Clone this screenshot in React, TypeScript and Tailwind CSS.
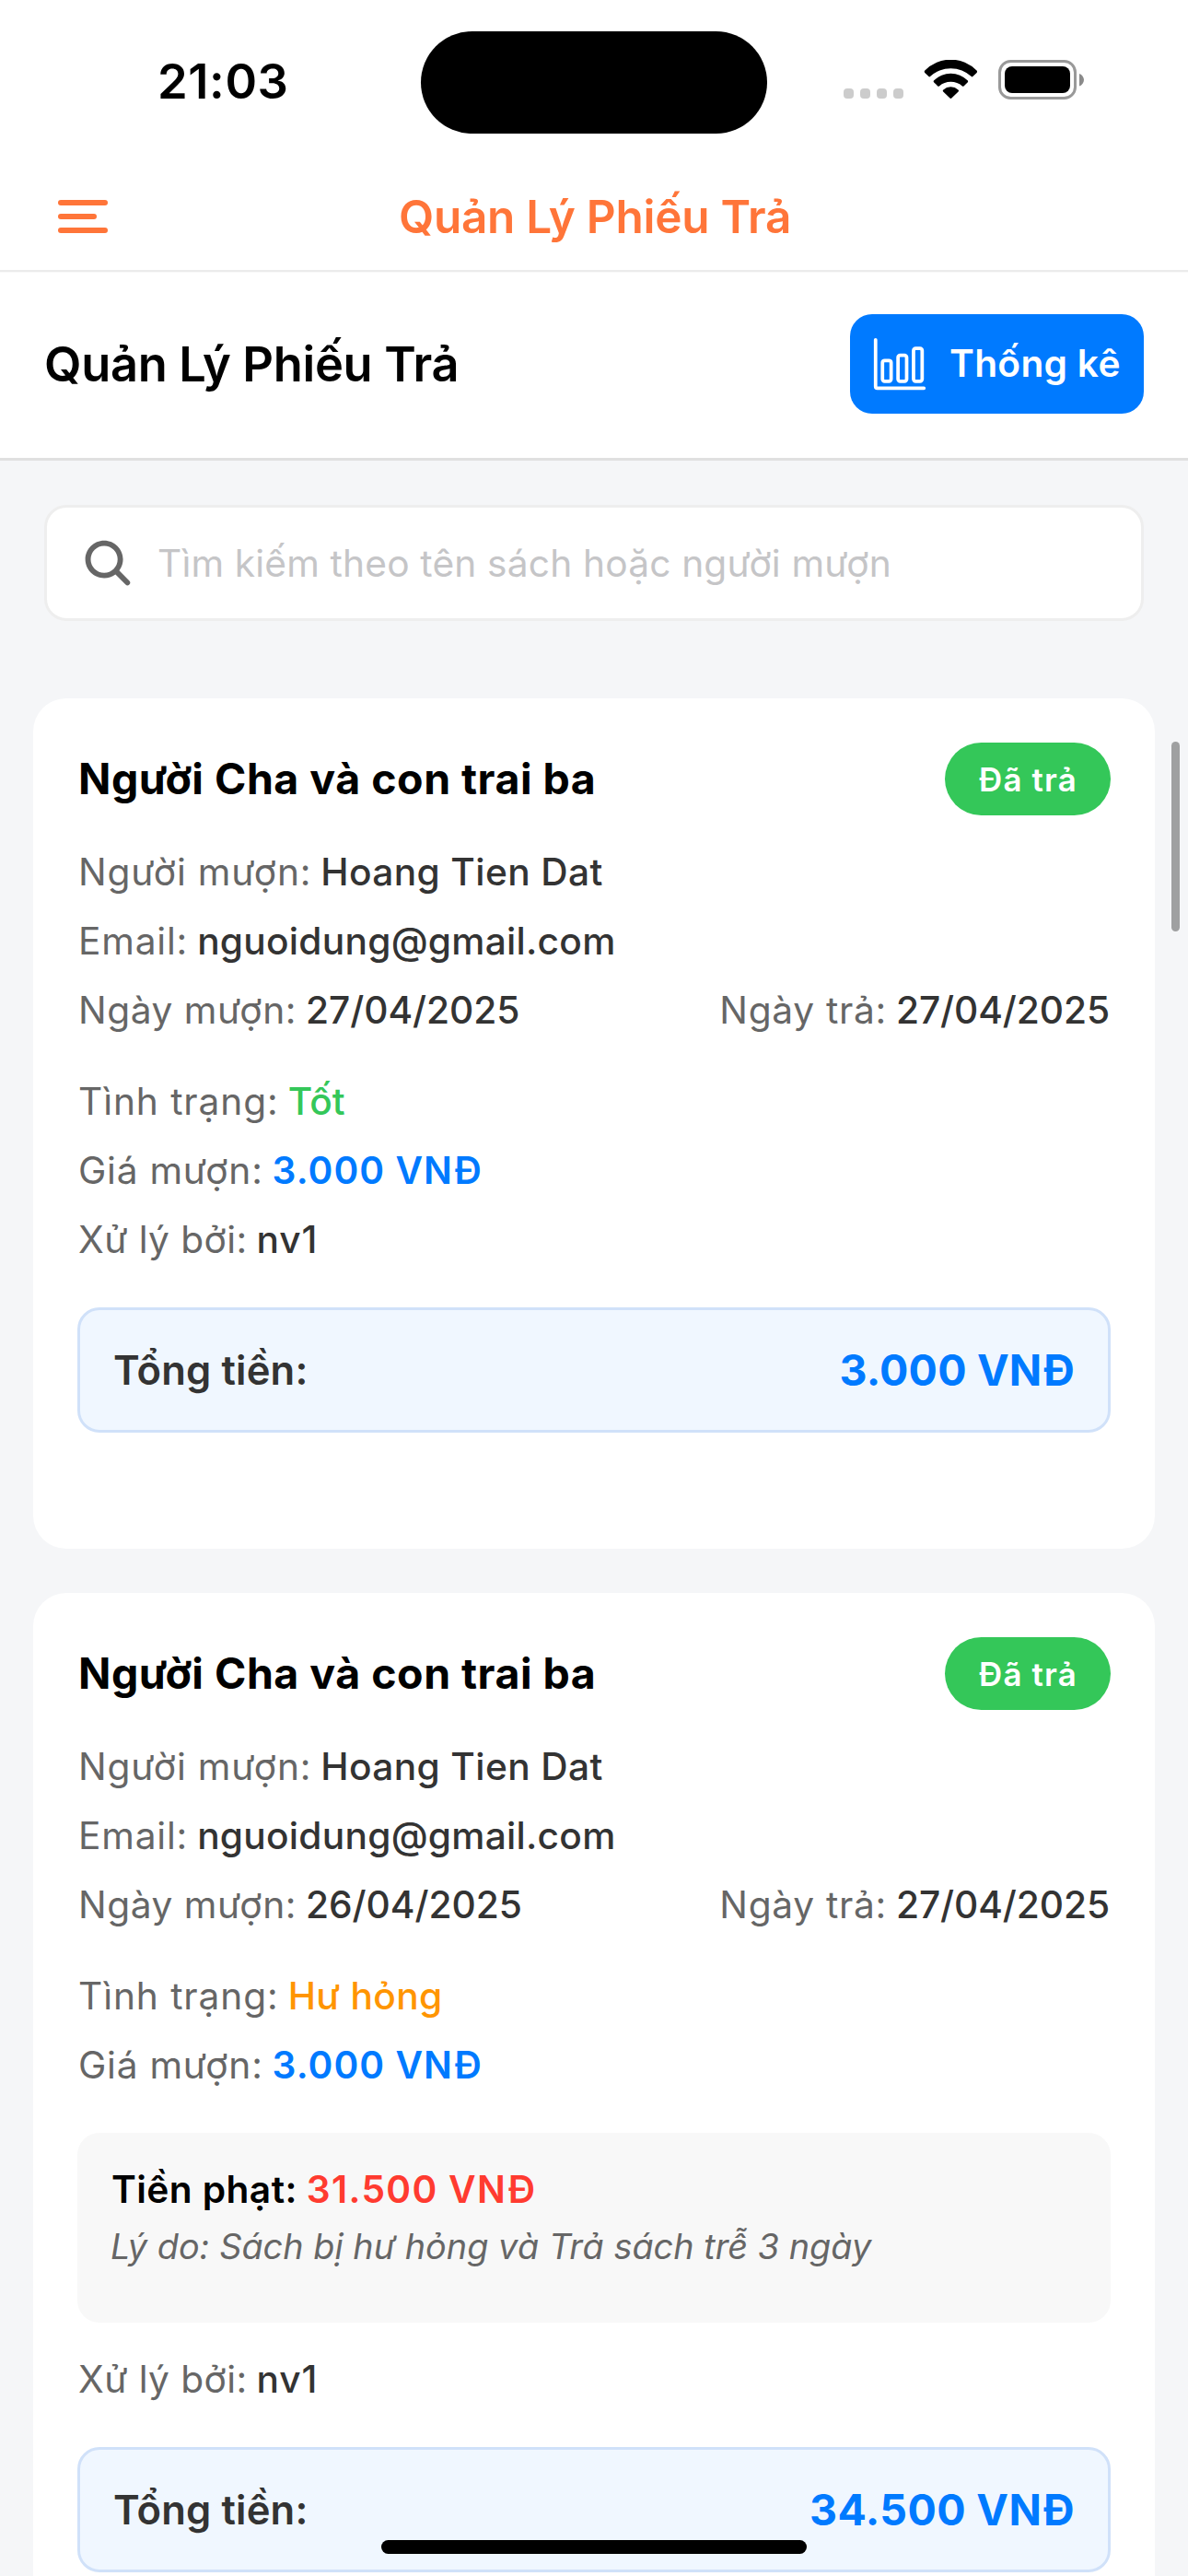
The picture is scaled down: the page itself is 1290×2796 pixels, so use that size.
import type { ReactNode } from 'react';
import { IoBarChartOutline, IoSearch } from 'react-icons/io5';

type Slip = {
  title: string;
  borrower: string;
  email: string;
  borrowed: string;
  returned: string;
  condition: string;
  conditionStyle: string;
  price: string;
  fine?: { amount: string; reason: string };
  handler: string;
  total: string;
  totalTracking: string;
};

const slips: Slip[] = [
  {
    title: 'Người Cha và con trai ba',
    borrower: 'Hoang Tien Dat',
    email: 'nguoidung@gmail.com',
    borrowed: '27/04/2025',
    returned: '27/04/2025',
    condition: 'Tốt',
    conditionStyle: 'text-[#34c759] tracking-[0.002em]',
    price: '3.000 VNĐ',
    handler: 'nv1',
    total: '3.000 VNĐ',
    totalTracking: 'tracking-[0.0044em]',
  },
  {
    title: 'Người Cha và con trai ba',
    borrower: 'Hoang Tien Dat',
    email: 'nguoidung@gmail.com',
    borrowed: '26/04/2025',
    returned: '27/04/2025',
    condition: 'Hư hỏng',
    conditionStyle: 'text-[#ff9500] tracking-[0.008em]',
    price: '3.000 VNĐ',
    fine: {
      amount: '31.500 VNĐ',
      reason: 'Lý do: Sách bị hư hỏng và Trả sách trễ 3 ngày',
    },
    handler: 'nv1',
    total: '34.500 VNĐ',
    totalTracking: 'tracking-[0.0085em]',
  },
];

function StatusIcons() {
  return (
    <svg width="262" height="44" viewBox="0 0 262 44" className="-mt-[3px] shrink-0">
      <g fill="#cccccc">
        <rect x="0" y="31" width="11" height="11" rx="4" />
        <rect x="18" y="31" width="11" height="11" rx="4" />
        <rect x="36" y="31" width="11" height="11" rx="4" />
        <rect x="54" y="31" width="11" height="11" rx="4" />
      </g>
      <g fill="#000000">
        <path d="M88.3 11.6A39 39 0 0 1 144.5 11.6Q145.6 12.8 144.6 13.9L140.3 18.1Q139.6 18.8 138.8 18.1A32.5 32.5 0 0 0 94 18.1Q93.2 18.8 92.5 18.1L88.2 13.9Q87.2 12.8 88.3 11.6Z" />
        <path d="M98.2 22.3A25.6 25.6 0 0 1 134.6 22.3Q135.7 23.4 134.6 24.5L130.5 28.4Q129.7 29 128.9 28.4A19.4 19.4 0 0 0 103.9 28.4Q103.1 29 102.3 28.4L98.2 24.5Q97.1 23.4 98.2 22.3Z" />
        <path d="M108.3 32.4A12.2 12.2 0 0 1 124.5 32.4Q125.7 33.5 124.6 34.5L117.3 41.6Q116.4 42.4 115.5 41.6L108.2 34.5Q107.1 33.5 108.3 32.4Z" />
        <rect x="175" y="7" width="71" height="29" rx="8" />
      </g>
      <rect x="169.5" y="1.5" width="82" height="40" rx="12" fill="none" stroke="#999999" strokeWidth="3" />
      <path d="M256 15C259 16 261 19 261 21.7S259 27.4 256 28.5Z" fill="#8a8a8a" />
    </svg>
  );
}

function StatusBar() {
  return (
    <div className="grid h-[177px] grid-cols-[457px_376px_457px] items-center">
      <span className="-mt-[2px] pl-[171px] text-[52.5px] leading-[64px] font-semibold tracking-[0.011em]">21:03</span>
      <div className="mt-px h-[111px] rounded-full bg-black" />
      <div className="flex pl-[83px]">
        <StatusIcons />
      </div>
    </div>
  );
}

function NavBar() {
  return (
    <header className="border-b border-[#f8f8f8]">
      <div className="grid h-[118px] grid-cols-[1fr_auto_1fr] items-center border-b-2 border-[#ebebeb] px-[63px] text-[#ff7539]">
        <div className="flex flex-col gap-[9px]">
          <span className="h-[6px] w-[54px] rounded-full bg-[#ff7539]" />
          <span className="h-[6px] w-[42px] rounded-full bg-[#ff7539]" />
          <span className="h-[6px] w-[54px] rounded-full bg-[#ff7539]" />
        </div>
        <span className="pl-[2px] text-[49.5px] leading-[60px] font-semibold tracking-[-0.0054em]">Quản Lý Phiếu Trả</span>
      </div>
    </header>
  );
}

function Row({ label, tracking = 'tracking-[0.0195em]', children }: { label: string; tracking?: string; children: ReactNode }) {
  return (
    <div className="flex gap-[10px] pl-px text-[40.7px] leading-[51px] whitespace-nowrap text-[#333333]">
      <span className={`text-[#666666] ${tracking}`}>{label}</span>
      {children}
    </div>
  );
}

function SlipCard({ slip }: { slip: Slip }) {
  return (
    <article className="flex flex-col rounded-[36px] bg-white px-12 pt-12 pb-[126px]">
      <div className="flex h-[79px] items-center justify-between">
        <h2 className="pb-[2px] pl-px text-[46.5px] leading-[58px] font-bold tracking-[0.0107em]">{slip.title}</h2>
        <span className="flex h-[79px] w-[180px] items-center justify-center rounded-full bg-[#34c759] pt-px pl-px text-[34.9px] leading-[44px] font-semibold tracking-[0.033em] text-white">
          Đã trả
        </span>
      </div>

      <div className="mt-9 flex flex-col gap-6">
        <Row label="Người mượn:">
          <span className="font-medium tracking-[0.009em]">{slip.borrower}</span>
        </Row>
        <Row label="Email:">
          <span className="font-medium tracking-[0.006em]">{slip.email}</span>
        </Row>
        <div className="flex justify-between pr-px">
          <Row label="Ngày mượn:" tracking="tracking-[0.013em]">
            <span className="font-medium tracking-[-0.001em]">{slip.borrowed}</span>
          </Row>
          <Row label="Ngày trả:" tracking="tracking-[0.017em]">
            <span className="font-medium tracking-[-0.002em]">{slip.returned}</span>
          </Row>
        </div>
      </div>

      <div className="mt-12 flex flex-col gap-6">
        <Row label="Tình trạng:" tracking="tracking-[0.022em]">
          <span className={`font-medium ${slip.conditionStyle}`}>{slip.condition}</span>
        </Row>
        <Row label="Giá mượn:" tracking="tracking-[0.018em]">
          <span className="font-semibold tracking-[0.0253em] text-[#007aff]">{slip.price}</span>
        </Row>
        {!slip.fine && (
          <Row label="Xử lý bởi:" tracking="tracking-[0.01em]">
            <span className="font-medium tracking-[0.02em]">{slip.handler}</span>
          </Row>
        )}
      </div>

      {slip.fine && (
        <>
          <div className="mt-12 h-[206px] rounded-3xl bg-[#f8f8f8] p-9">
            <div className="flex gap-[10px] pl-px text-[40.7px] leading-[51px] font-semibold">
              <span className="tracking-[0.01em]">Tiền phạt:</span>
              <span className="tracking-[0.032em] text-[#ff3b30]">{slip.fine.amount}</span>
            </div>
            <p className="mt-3 text-[37.8px] leading-[48px] tracking-[0.0005em] whitespace-nowrap text-[#666666] italic">
              {slip.fine.reason}
            </p>
          </div>
          <div className="mt-9">
            <Row label="Xử lý bởi:" tracking="tracking-[0.01em]">
              <span className="font-medium tracking-[0.02em]">{slip.handler}</span>
            </Row>
          </div>
        </>
      )}

      <div className="mt-12 flex h-[136px] items-center justify-between rounded-3xl border-[3px] border-[#d0e1f9] bg-[#f0f7ff] px-9">
        <span className="pt-[2px] text-[43.6px] leading-[54px] font-semibold tracking-[0.0033em] text-[#333333]">Tổng tiền:</span>
        <span className={`text-[46.5px] leading-[58px] font-bold text-[#007aff] ${slip.totalTracking}`}>{slip.total}</span>
      </div>
    </article>
  );
}

export default function App() {
  return (
    <div className="relative flex h-[2796px] w-[1290px] flex-col overflow-hidden bg-[#f5f6f8] font-['Inter',sans-serif] text-black">
      <div className="shrink-0 border-b-[3px] border-[#e0e0e0] bg-white">
        <StatusBar />
        <NavBar />
        <div className="flex items-center justify-between px-12 pt-[45px] pb-12">
          <h1 className="text-[52.4px] leading-[64px] font-semibold tracking-[-0.0064em]">Quản Lý Phiếu Trả</h1>
          <button className="flex h-[108px] w-[319px] items-center gap-[24px] rounded-3xl bg-[#007aff] px-6 text-white">
            <IoBarChartOutline className="size-[60px] shrink-0" />
            <span className="pb-[2px] text-[40.7px] leading-[51px] font-semibold tracking-[0.007em] whitespace-nowrap">Thống kê</span>
          </button>
        </div>
      </div>

      <div className="shrink-0 px-12 pt-12">
        <div className="flex h-[126px] items-center gap-[24px] rounded-3xl border-[3px] border-[#eeeeee] bg-white px-9">
          <IoSearch className="size-[60px] shrink-0 text-[#666666]" />
          <span className="text-[40.7px] leading-[51px] tracking-[0.0039em] text-[#c5c5c7]">
            Tìm kiếm theo tên sách hoặc người mượn
          </span>
        </div>
      </div>

      <main className="mt-[84px] flex shrink-0 flex-col gap-12 px-9">
        {slips.map((slip, i) => (
          <SlipCard key={i} slip={slip} />
        ))}
      </main>

      <div className="absolute top-[805px] right-[9px] h-[206px] w-[9px] rounded-full bg-[#9fa0a1]" />
      <div className="absolute bottom-[24px] left-[414px] h-[15px] w-[462px] rounded-full bg-black" />
    </div>
  );
}
